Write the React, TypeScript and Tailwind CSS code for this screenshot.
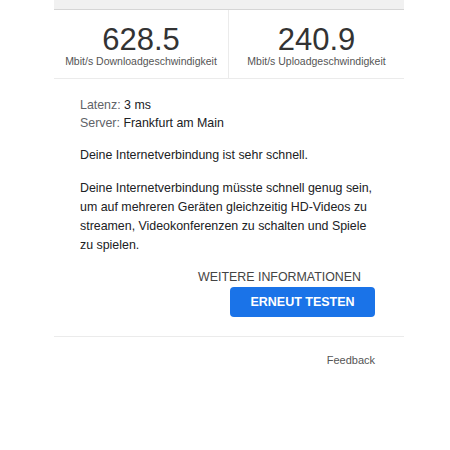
export default function App() {
  return (
    <div
      className="w-[450px] h-[450px] bg-white overflow-hidden"
      style={{ fontFamily: '"Liberation Sans", Arial, sans-serif' }}
    >
      <div className="ml-[54px] w-[350px]">
        {/* header strip */}
        <div className="h-[10px] bg-[#f1f1f1] border-b border-[#d6d6d6]" />

        {/* speed results */}
        <div className="grid grid-cols-[175px_1fr] border-b border-[#ebebeb]">
          <div className="flex flex-col items-center pt-[14px] pb-[10px] border-r border-[#ebebeb]">
            <div className="text-[31px] leading-[32px] text-[#333]">628.5</div>
            <div className="text-[10.5px] leading-[14px] -mt-[2px] text-[#555]">
              Mbit/s Downloadgeschwindigkeit
            </div>
          </div>
          <div className="flex flex-col items-center pt-[14px] pb-[10px]">
            <div className="text-[31px] leading-[32px] text-[#333]">240.9</div>
            <div className="text-[10.5px] leading-[14px] -mt-[2px] text-[#555]">
              Mbit/s Uploadgeschwindigkeit
            </div>
          </div>
        </div>

        {/* details */}
        <div className="pl-[26px] pr-[29px] pt-[17px] text-[12.4px] text-[#202124]">
          <div className="leading-[18px]">
            <span className="text-[#5f6368]">Latenz:</span> 3 ms
          </div>
          <div className="leading-[18px]">
            <span className="text-[#5f6368]">Server:</span> Frankfurt am Main
          </div>
          <p className="mt-[14px] leading-[19px]">
            Deine Internetverbindung ist sehr schnell.
          </p>
          <p className="mt-[14px] leading-[19px]">
            Deine Internetverbindung müsste schnell genug sein, um auf mehreren
            Geräten gleichzeitig HD-Videos zu streamen, Videokonferenzen zu
            schalten und Spiele zu spielen.
          </p>
          <div className="flex flex-col items-end mt-[14px]">
            <div className="text-[12.4px] leading-[16px] text-[#444] mr-[14px]">
              WEITERE INFORMATIONEN
            </div>
            <button className="mt-[2px] w-[145px] h-[30px] rounded-[4px] bg-[#1a73e8] text-white text-[12.5px] font-bold">
              ERNEUT TESTEN
            </button>
          </div>
        </div>
        <div className="mt-[19px] border-b border-[#ebebeb]" />
        <div className="flex justify-end pr-[29px] pt-[15px]">
          <span className="text-[11px] text-[#555]">Feedback</span>
        </div>
      </div>
    </div>
  );
}
